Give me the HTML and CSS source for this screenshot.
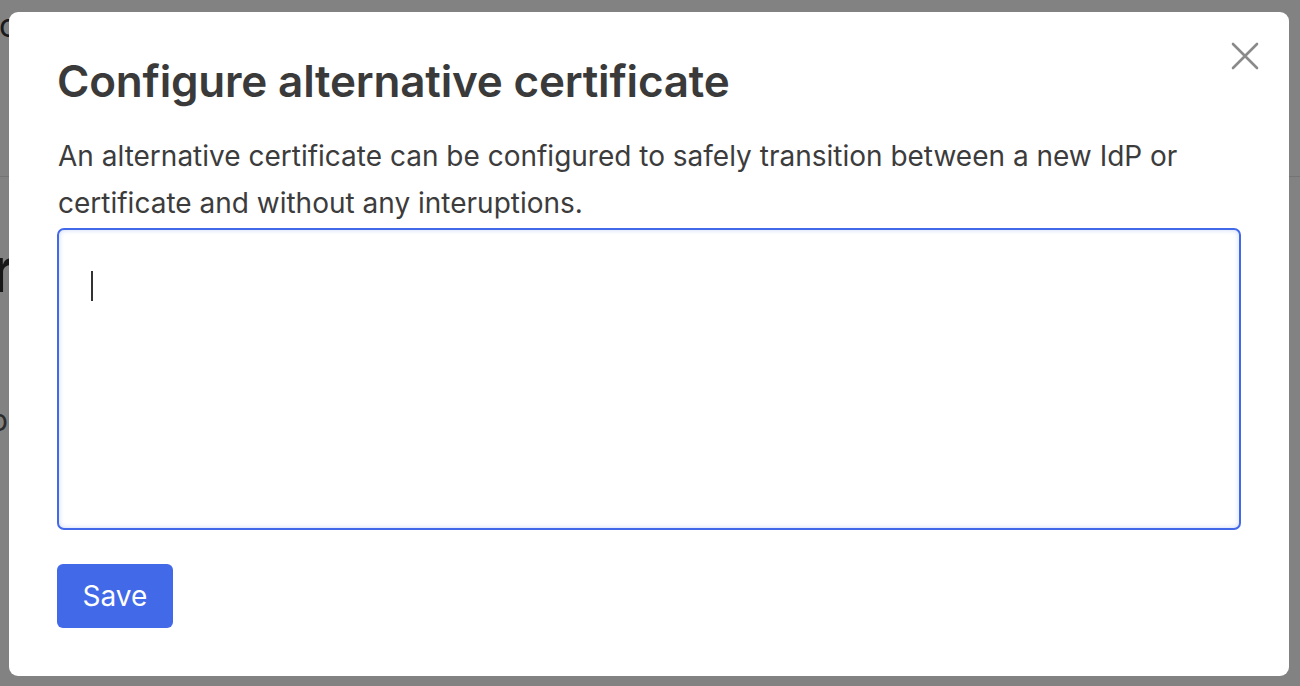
FILE: index.html
```html
<!DOCTYPE html>
<html lang="en">
<head>
<meta charset="utf-8">
<title>Configure alternative certificate</title>
<link rel="stylesheet" href="styles.css">
</head>
<body>
<div class="page" aria-hidden="true">
  <div class="page-header"><span class="page-brand">c</span></div>
  <div class="page-main">
    <div class="page-title">r</div>
    <div class="page-text">o</div>
  </div>
</div>
<div class="overlay"></div>
<div class="modal" role="dialog" aria-labelledby="modal-title">
  <button class="close" aria-label="Close">
    <svg width="28" height="28" viewBox="0 0 28 28"><path d="M2 2 L26 26 M26 2 L2 26" stroke="#8a8a8a" stroke-width="2.6" stroke-linecap="round" fill="none"/></svg>
  </button>
  <h2 class="modal-title" id="modal-title">Configure alternative certificate</h2>
  <p class="modal-text">An alternative certificate can be configured to safely transition between a new IdP or certificate and without any interuptions.</p>
  <div class="field"><span class="caret"></span></div>
  <div class="actions"><button class="btn-save">Save</button></div>
</div>
</body>
</html>
```
FILE: styles.css
```css
html, body {
  margin: 0;
  padding: 0;
  height: 100%;
  overflow: hidden;
}
body {
  font-family: "Inter", "Noto Sans", sans-serif;
  background: #ffffff;
}
.page {
  height: 100%;
  color: #2a2a2a;
}
.page-header {
  height: 177px;
  border-bottom: 1px solid #e4e4e4;
  padding-top: 8px;
  box-sizing: border-box;
}
.page-brand {
  display: block;
  font-size: 32px;
  line-height: 36px;
  margin-left: -1px;
  color: #333;
}
.page-main {
  padding-top: 58px;
}
.page-title {
  margin-left: -9px;
  font-size: 62px;
  line-height: 70px;
  font-weight: 600;
  color: #2e2e2e;
}
.page-text {
  margin: 97px 0 0 -10px;
  font-size: 30px;
  line-height: 36px;
  color: #555;
}
.overlay {
  position: fixed;
  inset: 0;
  background: rgba(0, 0, 0, 0.49);
}
.modal {
  position: fixed;
  top: 12px;
  left: 9px;
  width: 1280px;
  height: 664px;
  box-sizing: border-box;
  background: #fff;
  border-radius: 9px;
  padding: 47px 48px 0 48px;
  display: flex;
  flex-direction: column;
}
.close {
  position: absolute;
  top: 30px;
  right: 30px;
  width: 28px;
  height: 28px;
  padding: 0;
  border: 0;
  background: none;
  cursor: pointer;
}
.close svg { display: block; }
.modal-title {
  margin: 0;
  font-size: 44px;
  line-height: 44px;
  font-weight: 600;
  letter-spacing: -0.2px;
  color: #3a3a3a;
}
.modal-text {
  margin: 30px 0 0 1px;
  font-size: 28px;
  line-height: 47px;
  color: #3c3c3c;
}
.field {
  margin-top: 1px;
  height: 302px;
  box-sizing: border-box;
  border: 2px solid #4169e8;
  border-radius: 7px;
  box-shadow: inset 0 0 5px rgba(65, 105, 232, 0.28);
  padding: 41px 32px;
}
.caret {
  display: block;
  width: 2px;
  height: 30px;
  background: #333;
}
.actions {
  margin-top: 34px;
}
.btn-save {
  width: 116px;
  height: 64px;
  border: 0;
  border-radius: 6px;
  background: #4169e8;
  color: #fff;
  font-family: inherit;
  font-size: 28px;
  cursor: pointer;
}
```
